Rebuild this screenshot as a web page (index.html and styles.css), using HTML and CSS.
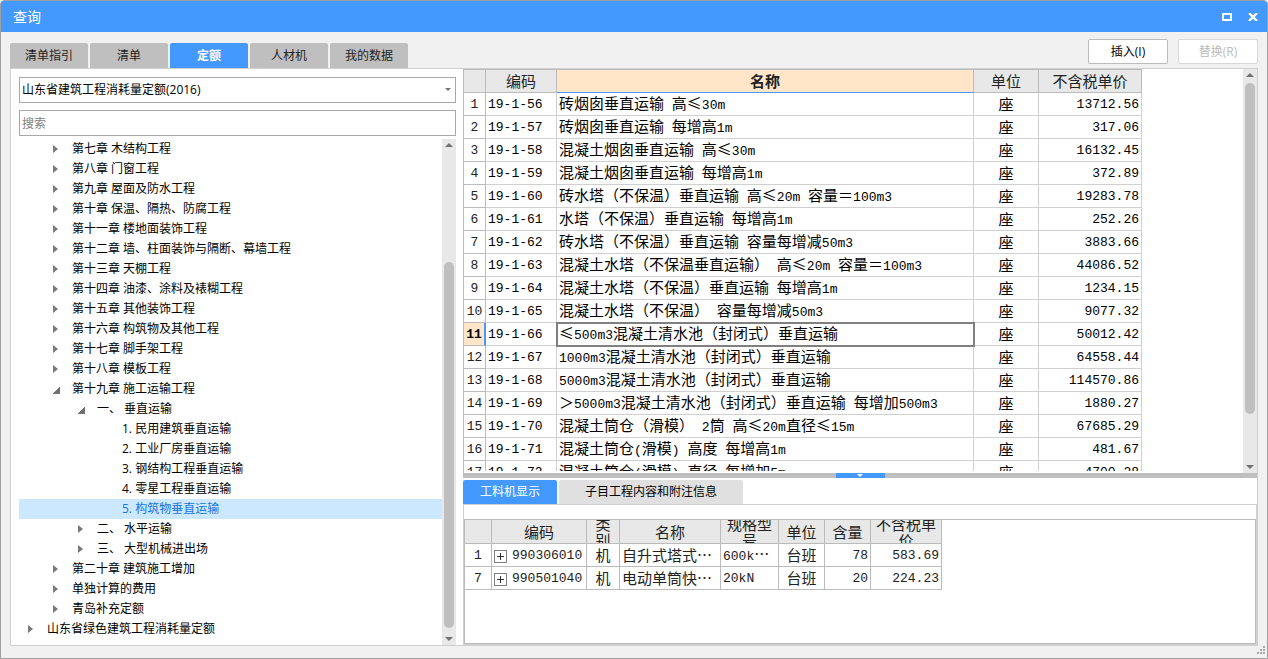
FILE: index.html
```html
<!DOCTYPE html>
<html lang="zh-CN">
<head>
<meta charset="utf-8">
<title>查询</title>
<link rel="stylesheet" href="styles.css">
</head>
<body>
<div class="window">
  <header class="titlebar">
    <h1 class="title">查询</h1>
    <button class="winbtn" aria-label="最大化"><svg width="10" height="8" viewBox="0 0 10 8"><path d="M0 0h10v8H0zM2 2v4h6V2z" fill="#fff" fill-rule="evenodd"/></svg></button>
    <button class="winbtn" aria-label="关闭"><svg width="10" height="8" viewBox="0 0 10 8"><path d="M1 0l8 8M9 0l-8 8" stroke="#fff" stroke-width="2.4"/></svg></button>
  </header>
  <div class="toolbar">
    <nav class="tabs">
      <button class="tab">清单指引</button>
      <button class="tab">清单</button>
      <button class="tab active">定额</button>
      <button class="tab">人材机</button>
      <button class="tab">我的数据</button>
    </nav>
    <div class="actions">
      <button class="action">插入(I)</button>
      <button class="action" disabled>替换(R)</button>
    </div>
  </div>
  <main class="content">
    <aside class="side">
      <div class="combo">
        <select class="field" aria-label="定额库"><option>山东省建筑工程消耗量定额(2016)</option></select>
        <svg class="combo-arrow" width="6" height="3" viewBox="0 0 6 3"><path d="M0 0h6L3 3z" fill="#777"/></svg>
      </div>
      <input class="field" type="text" placeholder="搜索" aria-label="搜索">
      <div class="tree-wrap">
        <ul class="tree">
          <li class="node l1 closed">第七章 木结构工程</li>
          <li class="node l1 closed">第八章 门窗工程</li>
          <li class="node l1 closed">第九章 屋面及防水工程</li>
          <li class="node l1 closed">第十章 保温、隔热、防腐工程</li>
          <li class="node l1 closed">第十一章 楼地面装饰工程</li>
          <li class="node l1 closed">第十二章 墙、柱面装饰与隔断、幕墙工程</li>
          <li class="node l1 closed">第十三章 天棚工程</li>
          <li class="node l1 closed">第十四章 油漆、涂料及裱糊工程</li>
          <li class="node l1 closed">第十五章 其他装饰工程</li>
          <li class="node l1 closed">第十六章 构筑物及其他工程</li>
          <li class="node l1 closed">第十七章 脚手架工程</li>
          <li class="node l1 closed">第十八章 模板工程</li>
          <li class="node l1 open">第十九章 施工运输工程</li>
          <li class="node l2 open">一、 垂直运输</li>
          <li class="node l3">1. 民用建筑垂直运输</li>
          <li class="node l3">2. 工业厂房垂直运输</li>
          <li class="node l3">3. 钢结构工程垂直运输</li>
          <li class="node l3">4. 零星工程垂直运输</li>
          <li class="node l3 selected">5. 构筑物垂直运输</li>
          <li class="node l2 closed">二、 水平运输</li>
          <li class="node l2 closed">三、 大型机械进出场</li>
          <li class="node l1 closed">第二十章 建筑施工增加</li>
          <li class="node l1 closed">单独计算的费用</li>
          <li class="node l1 closed">青岛补充定额</li>
          <li class="node closed">山东省绿色建筑工程消耗量定额</li>
        </ul>
        <div class="scroll">
          <svg width="8" height="4" viewBox="0 0 8 4"><path d="M0 4h8L4 0z" fill="#707070"/></svg>
          <div class="track"><div class="thumb side-thumb"></div></div>
          <svg width="8" height="4" viewBox="0 0 8 4"><path d="M0 0h8L4 4z" fill="#707070"/></svg>
        </div>
      </div>
    </aside>
    <section class="detail">
      <div class="upper">
        <div class="grid-view">
          <table class="grid main-grid">
            <colgroup><col class="w22"><col class="w71"><col class="w417"><col class="w65"><col class="w103"></colgroup>
            <thead><tr><th></th><th>编码</th><th class="current">名称</th><th>单位</th><th>不含税单价</th></tr></thead>
            <tbody>
              <tr><th>1</th><td class="n">19-1-56</td><td>砖烟囱垂直运输<span class="n"> </span>高≤<span class="n">30m</span></td><td class="c">座</td><td class="n r">13712.56</td></tr>
              <tr><th>2</th><td class="n">19-1-57</td><td>砖烟囱垂直运输<span class="n"> </span>每增高<span class="n">1m</span></td><td class="c">座</td><td class="n r">317.06</td></tr>
              <tr><th>3</th><td class="n">19-1-58</td><td>混凝土烟囱垂直运输<span class="n"> </span>高≤<span class="n">30m</span></td><td class="c">座</td><td class="n r">16132.45</td></tr>
              <tr><th>4</th><td class="n">19-1-59</td><td>混凝土烟囱垂直运输<span class="n"> </span>每增高<span class="n">1m</span></td><td class="c">座</td><td class="n r">372.89</td></tr>
              <tr><th>5</th><td class="n">19-1-60</td><td>砖水塔（不保温）垂直运输<span class="n"> </span>高≤<span class="n">20m </span>容量＝<span class="n">100m3</span></td><td class="c">座</td><td class="n r">19283.78</td></tr>
              <tr><th>6</th><td class="n">19-1-61</td><td>水塔（不保温）垂直运输<span class="n"> </span>每增高<span class="n">1m</span></td><td class="c">座</td><td class="n r">252.26</td></tr>
              <tr><th>7</th><td class="n">19-1-62</td><td>砖水塔（不保温）垂直运输<span class="n"> </span>容量每增减<span class="n">50m3</span></td><td class="c">座</td><td class="n r">3883.66</td></tr>
              <tr><th>8</th><td class="n">19-1-63</td><td>混凝土水塔（不保温垂直运输）<span class="n"> </span>高≤<span class="n">20m </span>容量＝<span class="n">100m3</span></td><td class="c">座</td><td class="n r">44086.52</td></tr>
              <tr><th>9</th><td class="n">19-1-64</td><td>混凝土水塔（不保温）垂直运输<span class="n"> </span>每增高<span class="n">1m</span></td><td class="c">座</td><td class="n r">1234.15</td></tr>
              <tr><th>10</th><td class="n">19-1-65</td><td>混凝土水塔（不保温）<span class="n"> </span>容量每增减<span class="n">50m3</span></td><td class="c">座</td><td class="n r">9077.32</td></tr>
              <tr class="current-row"><th>11</th><td class="n">19-1-66</td><td class="focus">≤<span class="n">500m3</span>混凝土清水池（封闭式）垂直运输</td><td class="c">座</td><td class="n r">50012.42</td></tr>
              <tr><th>12</th><td class="n">19-1-67</td><td><span class="n">1000m3</span>混凝土清水池（封闭式）垂直运输</td><td class="c">座</td><td class="n r">64558.44</td></tr>
              <tr><th>13</th><td class="n">19-1-68</td><td><span class="n">5000m3</span>混凝土清水池（封闭式）垂直运输</td><td class="c">座</td><td class="n r">114570.86</td></tr>
              <tr><th>14</th><td class="n">19-1-69</td><td>＞<span class="n">5000m3</span>混凝土清水池（封闭式）垂直运输<span class="n"> </span>每增加<span class="n">500m3</span></td><td class="c">座</td><td class="n r">1880.27</td></tr>
              <tr><th>15</th><td class="n">19-1-70</td><td>混凝土筒仓（滑模）<span class="n"> 2</span>筒<span class="n"> </span>高≤<span class="n">20m</span>直径≤<span class="n">15m</span></td><td class="c">座</td><td class="n r">67685.29</td></tr>
              <tr><th>16</th><td class="n">19-1-71</td><td>混凝土筒仓<span class="n">(</span>滑模<span class="n">) </span>高度<span class="n"> </span>每增高<span class="n">1m</span></td><td class="c">座</td><td class="n r">481.67</td></tr>
              <tr><th>17</th><td class="n">19-1-72</td><td>混凝土筒仓<span class="n">(</span>滑模<span class="n">) </span>直径<span class="n"> </span>每增加<span class="n">5m</span></td><td class="c">座</td><td class="n r">4700.28</td></tr>
            </tbody>
          </table>
        </div>
        <div class="scroll">
          <svg width="8" height="4" viewBox="0 0 8 4"><path d="M0 4h8L4 0z" fill="#707070"/></svg>
          <div class="track"><div class="thumb main-thumb"></div></div>
          <svg width="8" height="4" viewBox="0 0 8 4"><path d="M0 0h8L4 4z" fill="#707070"/></svg>
        </div>
      </div>
      <div class="splitter"><button class="collapse" aria-label="收起"><svg width="6" height="3" viewBox="0 0 6 3"><path d="M0 0h6L3 3z" fill="#fff"/></svg></button></div>
      <div class="lower">
        <nav class="subtabs">
          <button class="subtab active">工料机显示</button>
          <button class="subtab">子目工程内容和附注信息</button>
        </nav>
        <div class="sub-view">
          <div class="sub-frame">
          <table class="grid sub-grid">
            <colgroup><col class="w27"><col class="w95"><col class="w33"><col class="w101"><col class="w58"><col class="w46"><col class="w46"><col class="w71"></colgroup>
            <thead><tr><th></th><th><div class="head">编码</div></th><th><div class="head">类别</div></th><th><div class="head">名称</div></th><th><div class="head">规格型号</div></th><th><div class="head">单位</div></th><th><div class="head">含量</div></th><th><div class="head">不含税单价</div></th></tr></thead>
            <tbody>
              <tr><th>1</th><td class="n"><div class="code"><button class="plus" aria-label="展开"></button>990306010</div></td><td class="c">机</td><td>自升式塔式⋯</td><td><span class="n">600k</span>⋯</td><td class="c">台班</td><td class="n r">78</td><td class="n r">583.69</td></tr>
              <tr><th>7</th><td class="n"><div class="code"><button class="plus" aria-label="展开"></button>990501040</div></td><td class="c">机</td><td>电动单筒快⋯</td><td class="n">20kN</td><td class="c">台班</td><td class="n r">20</td><td class="n r">224.23</td></tr>
            </tbody>
          </table>
          </div>
        </div>
      </div>
    </section>
  </main>
  <svg class="grip" width="8" height="8" viewBox="0 0 8 8"><path d="M6 0h2v2H6zM3 3h2v2H3zM6 3h2v2H6zM0 6h2v2H0zM3 6h2v2H3zM6 6h2v2H6z" fill="#a8a8a8"/></svg>
</div>
</body>
</html>
```

FILE: styles.css
```css
*, *::before { box-sizing: border-box; }
body {
  margin: 0;
  background: #fff;
  color: #000;
  font: 12px/20px "Open Sans", "Noto Sans CJK SC", sans-serif;
}
button, input, select { font: inherit; color: inherit; margin: 0; padding: 0; }
svg { display: block; flex: none; }

.window {
  position: relative;
  display: flex;
  flex-direction: column;
  height: 100vh;
  background: #f1f1f1;
  border: 1px solid #a0a0a0;
  border-radius: 4px 4px 0 0;
  overflow: hidden;
}
.titlebar {
  flex: none;
  display: flex;
  align-items: center;
  gap: 16px;
  height: 31px;
  padding: 0 9px 0 12px;
  background: #4499ff;
}
.title { flex: 1; margin: 0; font-size: 14px; font-weight: normal; color: #fff; }
.winbtn { border: 0; background: none; }

.toolbar {
  flex: none;
  display: flex;
  justify-content: space-between;
  align-items: flex-end;
  height: 36px;
  padding: 0 9px;
}
.tabs, .subtabs { display: flex; gap: 2px; }
.tab {
  width: 78px;
  height: 25px;
  border: 0;
  border-radius: 2px 2px 0 0;
  background: #bfbfbf;
  color: #222;
}
.tab.active { background: #4499ff; color: #fff; font-weight: bold; }
.actions { display: flex; gap: 10px; padding-bottom: 4px; }
.action {
  width: 80px;
  height: 25px;
  border: 1px solid #bbb;
  border-radius: 2px;
  background: #fff;
}
.action:disabled { border-color: #d8d8d8; color: #bbb; }

.content {
  flex: 1;
  min-height: 0;
  display: flex;
  margin: 0 9px 12px;
  background: #fff;
  border: 1px solid #d0d0d0;
}
.side {
  flex: none;
  display: flex;
  flex-direction: column;
  width: 452px;
  padding: 8px 7px 0 8px;
}
.combo { position: relative; display: flex; margin-bottom: 7px; }
.combo-arrow { position: absolute; right: 5px; top: 11px; pointer-events: none; }
.field {
  flex: none;
  width: 100%;
  height: 26px;
  padding: 0 2px;
  border: 1px solid #a8a8a8;
  border-radius: 0;
  background: #fff;
  appearance: none;
}
.field::placeholder { color: #808080; opacity: 1; }
.tree-wrap { flex: 1; min-height: 0; display: flex; margin-top: 3px; }
.tree { flex: 1; margin: 0; padding: 0; list-style: none; overflow: hidden; }
.node {
  display: flex;
  align-items: center;
  height: 20px;
  padding-left: 28px;
  white-space: pre;
}
.closed::before {
  content: "";
  flex: none;
  width: 5px;
  height: 8px;
  margin: 0 14px 0 -19px;
  border: solid transparent;
  border-width: 4px 0 4px 5px;
  border-left-color: #787878;
}
.open::before {
  content: "";
  flex: none;
  width: 7px;
  height: 7px;
  margin: 2px 12px 0 -19px;
  background: linear-gradient(135deg, transparent 50%, #707070 50%);
}
.l1 { padding-left: 53px; }
.l2 { padding-left: 78px; }
.l3 { padding-left: 103px; }
.selected { background: #cce8ff; color: #1874e0; }

.scroll {
  flex: none;
  display: flex;
  flex-direction: column;
  align-items: center;
  gap: 4px;
  width: 14px;
  padding: 4px 0;
  background: #e8e8e8;
}
.track { flex: 1; width: 10px; }
.thumb { border-radius: 5px; background: #bfbfbf; }
.side-thumb { height: 76%; margin-top: 111px; }
.main-thumb { height: 87%; margin-top: 2px; }

.detail { flex: 1; min-width: 0; display: flex; flex-direction: column; }
.upper { flex: 1; min-height: 0; display: flex; border-left: 1px solid #bbb; }
.grid-view { flex: 1; min-width: 0; margin-bottom: 2px; overflow: hidden; }
.grid {
  table-layout: fixed;
  width: 0;
  border-spacing: 0;
  font: 15px/18px "Noto Sans CJK SC", sans-serif;
}
.main-grid { border-top: 1px solid #bbb; }
.grid th, .grid td {
  height: 23px;
  padding: 0 2px;
  border: solid #d0d0d0;
  border-width: 0 1px 1px 0;
  white-space: pre;
  overflow: hidden;
  text-align: left;
  font-weight: normal;
}
.grid th {
  padding: 0;
  border-color: #bbb;
  text-align: center;
  color: #222;
}
.grid thead th { background: #e8e8e8; }
.grid tbody th, .grid .n { font-family: "Liberation Mono", monospace; font-size: 13px; }
.grid tbody th, .grid td.n { padding-top: 2px; }
.grid .c { text-align: center; }
.grid .r { text-align: right; }
.grid thead .current { background: #ffe6c8; border-bottom-color: #4499ff; font-weight: bold; }
.grid .current-row th { background: #ffe6c8; border-right: 2px solid #4499ff; font-weight: bold; color: #000; }
.grid .focus { outline: 2px solid #808080; outline-offset: -1px; }
.w22 { width: 22px; } .w27 { width: 27px; } .w33 { width: 33px; } .w46 { width: 46px; }
.w58 { width: 58px; } .w65 { width: 65px; } .w71 { width: 71px; } .w95 { width: 95px; }
.w101 { width: 101px; } .w103 { width: 103px; } .w417 { width: 417px; }

.splitter { flex: none; display: flex; justify-content: center; height: 5px; background: #bfbfbf; }
.collapse {
  display: flex;
  align-items: center;
  justify-content: center;
  width: 49px;
  height: 5px;
  border: 0;
  background: #4499ff;
}
.lower { flex: none; display: flex; flex-direction: column; height: 167px; padding-top: 2px; }
.subtab {
  height: 24px;
  padding: 0 26px;
  border: 0;
  border-radius: 2px 2px 0 0;
  background: #e0e0e0;
}
.subtab.active { padding: 0 17px; background: #4499ff; color: #fff; }
.sub-view {
  flex: 1;
  display: flex;
  padding-top: 14px;
  border: 1px solid #d0d0d0;
}
.sub-frame { flex: 1; border: 1px solid #bbb; }
.sub-grid { color: #222; }
.sub-grid th, .sub-grid td { border-color: #bbb; }
.head {
  display: flex;
  align-items: center;
  justify-content: center;
  height: 23px;
  padding: 0 4px;
  overflow: hidden;
  line-height: 16px;
  white-space: normal;
}
.code { display: flex; align-items: center; gap: 5px; }
.plus {
  flex: none;
  width: 13px;
  height: 13px;
  border: 1px solid #808080;
  background:
    linear-gradient(#333, #333) center / 7px 1px no-repeat,
    linear-gradient(#333, #333) center / 1px 7px no-repeat,
    #fff;
}
.grip { position: absolute; right: 2px; bottom: 4px; }
```
